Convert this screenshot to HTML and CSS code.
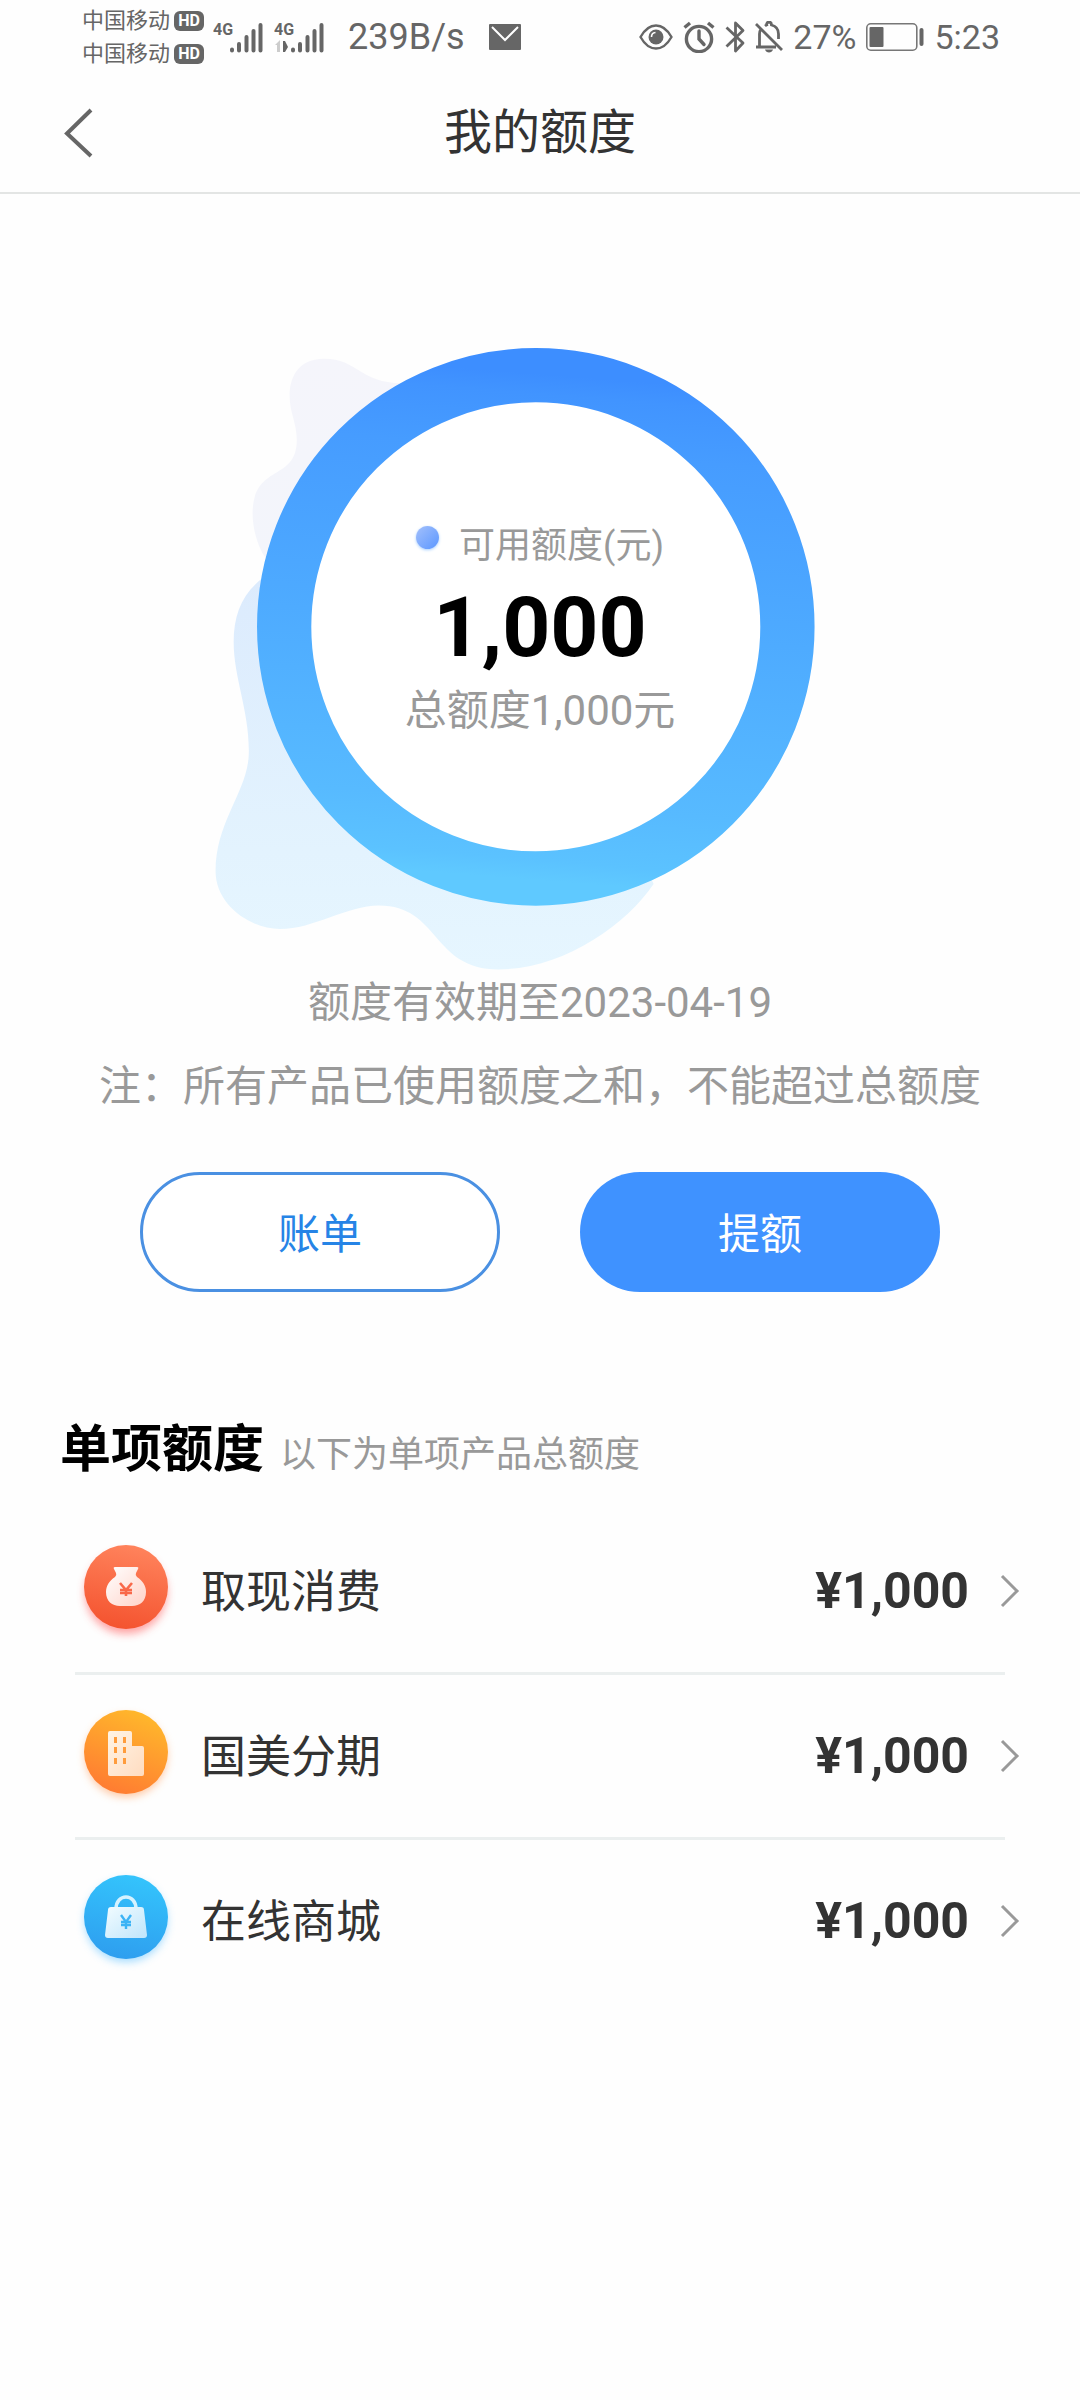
FILE: index.html
```html
<!DOCTYPE html>
<html lang="zh-CN">
<head>
<meta charset="utf-8">
<meta name="viewport" content="width=device-width, initial-scale=1">
<title>我的额度</title>
<link rel="stylesheet" href="styles.css">
</head>
<body>
<div class="status">
  <div class="carriers">
    <div class="carrier">中国移动<span class="hd">HD</span></div>
    <div class="carrier">中国移动<span class="hd">HD</span></div>
  </div>
  <svg class="signal" viewBox="0 0 52 36" width="52" height="36" aria-hidden="true">
    <text x="0" y="16" class="net">4G</text>
    <g stroke="#666" stroke-width="4" stroke-linecap="round"><path d="M19 30.500v1M26 25v6.500M33.500 18v13.500M40.500 12v19.500M47.500 6v25.500"/></g>
  </svg>
  <svg class="signal" viewBox="0 0 52 36" width="52" height="36" aria-hidden="true">
    <text x="0" y="16" class="net">4G</text>
    <path d="M1 26l5-5v12H3v-7z" fill="#ccc"/><path d="M9 22h2l3 6-3 5H9z" fill="#666"/>
    <g stroke="#666" stroke-width="4" stroke-linecap="round"><path d="M19 30.500v1M26 25v6.500M33.500 18v13.500M40.500 12v19.500M47.500 6v25.500"/></g>
  </svg>
  <span class="speed">239B/s</span>
  <svg viewBox="0 0 32 26" width="32" height="26" aria-hidden="true"><rect width="32" height="26" rx="1" fill="#666"/><path d="M3 3l13 13L29 3" fill="none" stroke="#fff" stroke-width="2"/></svg>
  <div class="system">
    <svg viewBox="0 0 34 26" width="34" height="26" aria-hidden="true"><path d="M1.500 13C6 5 11 1.500 17 1.500S28 5 32.500 13C28 21 23 24.500 17 24.500S6 21 1.500 13z" fill="none" stroke="#666" stroke-width="2.400"/><circle cx="17" cy="13" r="7.500" fill="#666"/><path d="M12.500 13a4.500 4.500 0 0 1 4-4.500" fill="none" stroke="#fff" stroke-width="1.600"/></svg>
    <svg viewBox="0 0 32 32" width="32" height="32" aria-hidden="true"><g fill="none" stroke="#666" stroke-width="3.400"><circle cx="16" cy="18" r="12.600"/><path d="M1.500 6.500L7 2M25 2l5.500 4.500"/><path d="M16 10v8l5 5.500" stroke-linecap="round"/></g></svg>
    <svg viewBox="0 0 20 32" width="20" height="32" aria-hidden="true"><path d="M1.500 6.500L18 22l-7.500 8V2L18 9.500 1.500 25.500" fill="none" stroke="#666" stroke-width="2.800" stroke-linejoin="round"/></svg>
    <svg viewBox="0 0 28 32" width="28" height="32" aria-hidden="true"><g fill="none" stroke="#666" stroke-width="2.800"><path d="M1 3l26 26M1 26h20M4.500 26V13c0-2 .5-3.500 1.500-5M10 5c1-.8 2-1.200 3-1.500M11.500 4c0-4 5-4 5 0 4 1 7 4 7 9v5"/></g><path d="M10 28.500h8c-1 4-7 4-8 0z" fill="#666"/></svg>
    <span>27%</span>
    <svg class="battery" viewBox="0 0 58 28" width="58" height="28" aria-hidden="true"><rect x=".8" y=".8" width="50" height="26.400" rx="4" fill="none" stroke="#777" stroke-width="1.600"/><rect x="3.500" y="4" width="14" height="20" rx="1" fill="#666"/><rect x="53.500" y="5" width="4" height="18" rx="2" fill="#666"/></svg>
    <span>5:23</span>
  </div>
</div>
<header class="header">
  <button class="back" type="button" aria-label="返回"><svg viewBox="0 0 30 52" width="30" height="52" aria-hidden="true"><path d="M27 3L3 26.500 27 49" fill="none" stroke="#666" stroke-width="4"/></svg></button>
  <h1 class="title">我的额度</h1>
</header>
<main>
  <section class="gauge">
    <svg class="gauge-art" viewBox="0 0 1616 1568" aria-hidden="true">
      <defs>
        <linearGradient id="ring" x1=".54" y1="0" x2=".46" y2="1"><stop offset="0" stop-color="#3d8eff"/><stop offset=".04" stop-color="#4194ff"/><stop offset=".15" stop-color="#469cff"/><stop offset=".5" stop-color="#4eabff"/><stop offset=".85" stop-color="#57baff"/><stop offset=".96" stop-color="#5bc2ff"/><stop offset="1" stop-color="#5fc9ff"/></linearGradient>
        <linearGradient id="mist" x1="0" y1="0" x2="0" y2="1"><stop offset="0" stop-color="#f5f5fb"/><stop offset="1" stop-color="#f3f5fb"/></linearGradient>
        <linearGradient id="water" x1="0" y1="0" x2="0" y2="1"><stop offset="0" stop-color="#dcebfd"/><stop offset=".7" stop-color="#e3f3fe"/><stop offset="1" stop-color="#e6f6ff"/></linearGradient>
      </defs>
      <path fill="url(#mist)" d="M480 150C380 150 375 92 295 92C230 92 213 140 213 180C213 220 230 245 230 285C230 385 125 340 125 460C125 500 140 545 158 568L500 400Z"/>
      <path fill="url(#water)" d="M150 612C100 650 80 700 80 765C80 850 118 930 116 1030C114 1120 37 1190 37 1310C37 1390 120 1447 190 1447C270 1447 350 1391 425 1391C570 1391 550 1543 710 1543C860 1543 1010 1440 1078 1340L800 700Z"/>
      <circle cx="798" cy="729" r="598" fill="#fff" stroke="url(#ring)" stroke-width="129"/>
    </svg>
    <div class="gauge-text">
      <div class="available"><span class="dot"></span>可用额度(元)</div>
      <div class="number">1,000</div>
      <div class="total">总额度1,000元</div>
    </div>
  </section>
  <div class="notes">
    <p>额度有效期至2023-04-19</p>
    <p>注：所有产品已使用额度之和，不能超过总额度</p>
  </div>
  <div class="actions">
    <button class="btn btn-outline" type="button">账单</button>
    <button class="btn btn-solid" type="button">提额</button>
  </div>
  <section class="limits">
    <div class="limits-head"><h2>单项额度</h2><span>以下为单项产品总额度</span></div>
    <ul class="list">
      <li>
        <a class="row" href="#cash">
          <svg class="icon" viewBox="0 0 112 120" aria-hidden="true">
            <defs><linearGradient id="red" x1=".6" y1="0" x2=".4" y2="1"><stop offset="0" stop-color="#ff835c"/><stop offset="1" stop-color="#f4532f"/></linearGradient>
            <linearGradient id="redIn" x1="0" y1="0" x2="1" y2="1"><stop offset="0" stop-color="#fff"/><stop offset="1" stop-color="#ffd3c8"/></linearGradient>
            <filter id="glow" x="-20%" y="-20%" width="140%" height="140%"><feGaussianBlur stdDeviation="4"/></filter></defs>
            <circle cx="56" cy="62" r="41" fill="#ff4747" opacity=".5" filter="url(#glow)"/>
            <circle cx="56" cy="56" r="42" fill="url(#red)"/>
            <path d="M45 36h22q2 0 1 2l-2 4q-1 2 1 4c6 4 9 9 9 15 0 9-6 14-14 14H50c-8 0-14-5-14-14 0-6 3-11 9-15q2-2 1-4l-2-4q-1-2 1-2z" fill="url(#redIn)"/>
            <path d="M50 52l6 7 6-7M56 59v6M50 59h12M50 62h12" fill="none" stroke="#f9694a" stroke-width="2.600"/>
          </svg>
          <span class="name">取现消费</span><span class="amount">¥1,000</span>
          <svg class="chevron" viewBox="0 0 20 34" aria-hidden="true"><path d="M2 2l15 15L2 32" fill="none" stroke="#999" stroke-width="3"/></svg>
        </a>
      </li>
      <li>
        <a class="row" href="#installment">
          <svg class="icon" viewBox="0 0 112 120" aria-hidden="true">
            <defs><linearGradient id="orange" x1=".7" y1="0" x2=".3" y2="1"><stop offset="0" stop-color="#ffb92b"/><stop offset="1" stop-color="#ff7a32"/></linearGradient>
            <linearGradient id="orangeIn" x1="0" y1="0" x2="1" y2="1"><stop offset="0" stop-color="#fff4e6"/><stop offset="1" stop-color="#ffdcc0"/></linearGradient></defs>
            <circle cx="56" cy="60" r="41" fill="#ff9147" opacity=".5" filter="url(#glow)"/>
            <circle cx="56" cy="56" r="42" fill="url(#orange)"/>
            <path d="M40 35h20q2 0 2 2v13h10q2 0 2 2v26q0 2-2 2H40q-2 0-2-2V37q0-2 2-2z" fill="url(#orangeIn)"/>
            <path d="M44 41h3v6h-3zM53 41h3v6h-3zM44 51h3v6h-3zM53 51h3v6h-3zM44 62h3v6h-3zM53 62h3v6h-3z" fill="#ff9c3c"/>
          </svg>
          <span class="name">国美分期</span><span class="amount">¥1,000</span>
          <svg class="chevron" viewBox="0 0 20 34" aria-hidden="true"><path d="M2 2l15 15L2 32" fill="none" stroke="#999" stroke-width="3"/></svg>
        </a>
      </li>
      <li>
        <a class="row" href="#mall">
          <svg class="icon" viewBox="0 0 112 120" aria-hidden="true">
            <defs><linearGradient id="blue" x1=".6" y1="0" x2=".4" y2="1"><stop offset="0" stop-color="#34c4fc"/><stop offset="1" stop-color="#2e9eef"/></linearGradient>
            <linearGradient id="blueIn" x1="0" y1="0" x2="1" y2="1"><stop offset="0" stop-color="#f2fcff"/><stop offset="1" stop-color="#bfe5fb"/></linearGradient></defs>
            <circle cx="56" cy="60" r="41" fill="#47b8ff" opacity=".5" filter="url(#glow)"/>
            <circle cx="56" cy="56" r="42" fill="url(#blue)"/>
            <path d="M46 48c0-16 20-16 20 0" fill="none" stroke="#d5f2ff" stroke-width="3.500"/>
            <path d="M41 46h30q3 0 3 3l3 25q0 3-3 3H38q-3 0-3-3l3-25q0-3 3-3z" fill="url(#blueIn)"/>
            <path d="M51 54l5 7 5-7M56 61v7M51 61h10M51 64h10" fill="none" stroke="#3db4f5" stroke-width="2.400"/>
          </svg>
          <span class="name">在线商城</span><span class="amount">¥1,000</span>
          <svg class="chevron" viewBox="0 0 20 34" aria-hidden="true"><path d="M2 2l15 15L2 32" fill="none" stroke="#999" stroke-width="3"/></svg>
        </a>
      </li>
    </ul>
  </section>
</main>
</body>
</html>
```
FILE: styles.css
```css
* {
  box-sizing: border-box;
}

body {
  margin: 0;
  min-height: 100vh;
  background: #fefefe;
  color: #333;
  font-family: Roboto, "Noto Sans CJK SC", sans-serif;
}

h1, h2, p, ul {
  margin: 0;
  padding: 0;
}

button {
  padding: 0;
  font-family: inherit;
  cursor: pointer;
}

svg {
  display: block;
  flex: none;
}

/* Status bar */
.status {
  display: flex;
  align-items: center;
  height: 74px;
  padding: 0 80px;
  color: #666;
  font-size: 36px;
  white-space: nowrap;
}

.carriers {
  display: flex;
  flex-direction: column;
  gap: 9px;
  padding-left: 2px;
}

.carrier {
  display: flex;
  align-items: center;
  gap: 4px;
  font-size: 22px;
  line-height: 24px;
}

.hd {
  width: 30px;
  border-radius: 6px;
  background: #666;
  color: #fff;
  font-size: 16px;
  font-weight: 700;
  line-height: 20px;
  text-align: center;
}

.signal {
  margin-left: 9px;
}

.net {
  fill: #666;
  font-size: 16px;
  font-weight: 700;
}

.speed {
  margin: 0 24px 0 22px;
}

.system {
  display: flex;
  align-items: center;
  gap: 10px;
  margin-left: auto;
  font-size: 34px;
}

/* Title bar */
.header {
  display: grid;
  grid-template-columns: 120px 1fr 120px;
  align-items: center;
  height: 120px;
  border-bottom: 2px solid #e3e5e4;
}

.back {
  display: flex;
  align-items: center;
  height: 118px;
  padding-left: 64px;
  border: 0;
  background: none;
}

.title {
  font-size: 48px;
  font-weight: 400;
  line-height: 72px;
  text-align: center;
}

/* Quota ring */
.gauge {
  display: grid;
  justify-content: center;
  margin-top: 126px;
}

.gauge-art {
  grid-area: 1 / 1;
  width: 680px;
  height: 660px;
}

.gauge-text {
  grid-area: 1 / 1;
  padding-top: 199px;
  color: #999;
  text-align: center;
}

.available {
  display: flex;
  justify-content: center;
  gap: 20px;
  font-size: 36px;
  line-height: 54px;
}

.dot {
  width: 23px;
  height: 23px;
  margin-top: 7px;
  border-radius: 50%;
  background: linear-gradient(135deg, #a3c0fc, #5b97ff);
  box-shadow: 0 1px 3px #a8d0ff;
}

.number {
  margin: 13px 0;
  color: #000;
  font-size: 84px;
  font-weight: 700;
  line-height: 84px;
}

.total {
  font-size: 42px;
  line-height: 56px;
}

.notes {
  display: grid;
  gap: 40px;
  padding-top: 1px;
  color: #999;
  font-size: 42px;
  line-height: 44px;
  text-align: center;
}

.actions {
  display: flex;
  justify-content: center;
  gap: 80px;
  margin-top: 63px;
}

.btn {
  width: 360px;
  height: 120px;
  padding-bottom: 4px;
  border-radius: 60px;
  font-size: 42px;
}

.btn-outline {
  border: 3px solid #4a90e2;
  background: #fff;
  color: #2684e6;
}

.btn-solid {
  border: 0;
  background: #3f92ff;
  color: #fff;
}

/* Per-product limits */
.limits {
  padding: 0 60px;
  margin-top: 126px;
}

.limits-head {
  display: flex;
  align-items: baseline;
  gap: 16px;
  margin-bottom: 23px;
  color: #999;
  font-size: 36px;
  line-height: 64px;
}

.limits-head h2 {
  color: #000;
  font-size: 51px;
  font-weight: 700;
}

.list {
  list-style: none;
}

.list li:not(:last-child)::after {
  content: "";
  display: block;
  height: 3px;
  margin: 0 15px;
  background: #ebefef;
}

.row {
  display: flex;
  align-items: center;
  height: 162px;
  padding-left: 10px;
  color: #333;
  text-decoration: none;
}

.icon {
  width: 112px;
  height: 120px;
}

.name {
  padding-bottom: 6px;
  margin-left: 19px;
  font-size: 45px;
}

.amount {
  margin-left: auto;
  font-size: 50px;
  font-weight: 700;
}

.chevron {
  width: 20px;
  height: 34px;
  margin-left: 31px;
}
```
